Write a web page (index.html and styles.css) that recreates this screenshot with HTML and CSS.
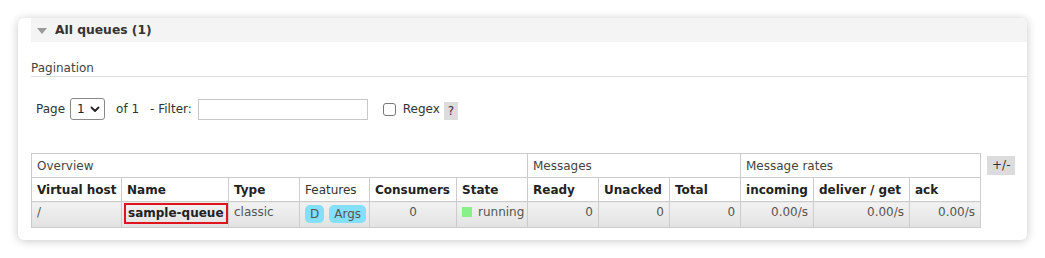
FILE: index.html
```html
<!DOCTYPE html>
<html>
<head>
<meta charset="utf-8">
<link rel="stylesheet" href="styles.css">
</head>
<body>
<div class="card">
  <div class="section-head">
    <span class="tri"></span>
    <span class="title">All queues (1)</span>
  </div>
  <div class="pag-label">Pagination</div>
  <div class="controls">
    <span>Page</span>
    <span class="select">1 <svg width="10" height="7" viewBox="0 0 10 7"><path d="M1.5 1.5 L5 5 L8.5 1.5" fill="none" stroke="#222" stroke-width="1.8" stroke-linecap="round" stroke-linejoin="round"/></svg></span>
    <span class="of">of 1</span>
    <span class="filter">- Filter:</span>
    <span class="input"></span>
    <span class="check"></span>
    <span class="regex">Regex</span>
    <span class="help">?</span>
  </div>
  <div class="table-wrap">
    <table class="queues">
      <colgroup>
        <col style="width:90px"><col style="width:107px"><col style="width:71px"><col style="width:70px"><col style="width:87px"><col style="width:71px"><col style="width:71px"><col style="width:71px"><col style="width:71px"><col style="width:73px"><col style="width:96px"><col style="width:71px">
      </colgroup>
      <tr class="group">
        <th colspan="6">Overview</th>
        <th colspan="3">Messages</th>
        <th colspan="3">Message rates</th>
      </tr>
      <tr class="cols">
        <th>Virtual host</th><th>Name</th><th>Type</th><th class="normal">Features</th><th>Consumers</th><th>State</th><th>Ready</th><th>Unacked</th><th>Total</th><th>incoming</th><th>deliver / get</th><th>ack</th>
      </tr>
      <tr class="data">
        <td>/</td>
        <td class="name"><span class="hl">sample-queue</span></td>
        <td>classic</td>
        <td><span class="badge">D</span><span class="badge">Args</span></td>
        <td class="c">0</td>
        <td><span class="sq"></span>running</td>
        <td class="r">0</td>
        <td class="r">0</td>
        <td class="r">0</td>
        <td class="r">0.00/s</td>
        <td class="r">0.00/s</td>
        <td class="r">0.00/s</td>
      </tr>
    </table>
    <span class="pm">+/-</span>
  </div>
</div>
</body>
</html>
```
FILE: styles.css
```css
html, body { margin: 0; padding: 0; background: #fff; }
body {
  font-family: "DejaVu Sans", Verdana, sans-serif;
  font-size: 12px;
  color: #484848;
  padding: 18px 0 0 18px;
  height: 258px;
  box-sizing: border-box;
}
.card {
  width: 1009px;
  height: 222px;
  box-sizing: border-box;
  background: #fff;
  border-radius: 6px;
  box-shadow: 0 1px 10px rgba(0,0,0,0.22);
  padding: 0 0 0 13px;
  overflow: hidden;
}
.section-head {
  height: 24px;
  background: #f4f4f4;
  display: flex;
  align-items: center;
  padding-left: 6px;
  gap: 8px;
}
.tri {
  width: 0; height: 0;
  border-left: 5px solid transparent;
  border-right: 5px solid transparent;
  border-top: 6px solid #9a9a9a;
  margin-top: 1px;
}
.title { font-weight: bold; color: #333; font-size: 12.3px; }
.pag-label {
  margin-top: 15px;
  height: 20px;
  box-sizing: border-box;
  padding-top: 2px;
  line-height: 18px;
  border-bottom: 1px solid #ddd;
  color: #444;
}
.controls {
  margin-top: 20px;
  height: 22px;
  display: flex;
  align-items: center;
  padding-left: 5px;
  color: #333;
  padding-top: 1px;
}
.select {
  margin-left: 5px;
  width: 35px;
  height: 22px;
  box-sizing: border-box;
  border: 1px solid #888;
  border-radius: 3px;
  display: flex;
  align-items: center;
  padding-left: 6px;
  gap: 5px;
  color: #222;
}
.of { margin-left: 11px; }
.filter { margin-left: 11px; }
.input {
  margin-left: 6px;
  width: 170px;
  height: 21px;
  box-sizing: border-box;
  border: 1px solid #c8c8c8;
}
.check {
  margin-left: 15px;
  width: 13px;
  height: 13px;
  box-sizing: border-box;
  border: 1px solid #777;
  border-radius: 3px;
}
.regex { margin-left: 7px; }
.help {
  margin-left: 4px;
  background: #dcdcdc;
  padding: 0 4px;
  height: 18px;
  line-height: 18px;
  margin-top: 3px;
}
.table-wrap {
  margin-top: 33px;
  display: flex;
  align-items: flex-start;
  gap: 6px;
}
.queues {
  table-layout: fixed;
  width: 949px;
  border-collapse: collapse;
  font-size: 12px;
}
.queues th, .queues td {
  border: 1px solid #ccc;
  text-align: left;
  padding: 0 5px;
  white-space: nowrap;
}
.group th {
  font-weight: normal;
  height: 23px;
  color: #444;
}
.cols th {
  height: 23px;
  color: #222;
}
.cols th.normal { font-weight: normal; color: #333; }
.data td {
  height: 26px;
  vertical-align: top;
  padding-top: 3px;
  box-sizing: border-box;
  background: linear-gradient(#f2f2f2, #e2e2e2);
  color: #555;
}
.data td.c { text-align: center; }
.data td.r { text-align: right; }
.data td.name { padding-left: 2px; padding-top: 1px; }
.hl {
  display: inline-block;
  border: 2px solid #e0141e;
  font-weight: bold;
  color: #222;
  padding: 1px 2px;
  line-height: 15px;
}
.badge {
  display: inline-block;
  background: #84dffa;
  border-radius: 5px;
  padding: 1px 5px;
  line-height: 16px;
  margin-right: 5px;
  color: #555;
}
.sq {
  display: inline-block;
  width: 10px;
  height: 10px;
  background: #88f088;
  margin-right: 6px;
  vertical-align: -1px;
}
.pm {
  margin-top: 3px;
  background: #dcdcdc;
  height: 19px;
  line-height: 19px;
  padding: 0 5px;
  color: #333;
}
```
